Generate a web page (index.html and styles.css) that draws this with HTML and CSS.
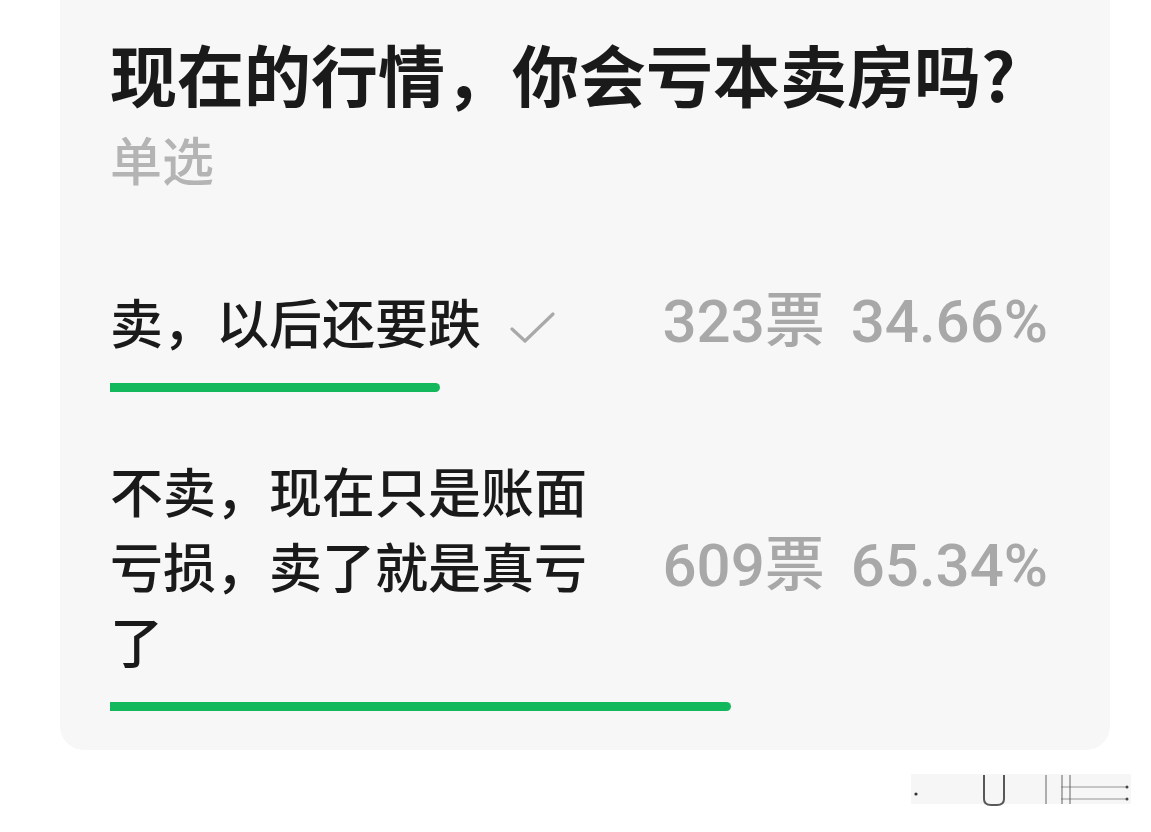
FILE: index.html
```html
<!DOCTYPE html>
<html lang="zh-CN">
<head>
  <meta charset="UTF-8">
  <meta name="viewport" content="width=device-width, initial-scale=1.0">
  <title>投票</title>
  <link rel="stylesheet" href="styles.css">
</head>
<body>
  <div class="card">
    <h1 class="vote-title">现在的行情，你会亏本卖房吗?</h1>
    <div class="vote-type">单选</div>

    <div class="option">
      <div class="option-row">
        <div class="option-label">卖，以后还要跌<svg class="check" width="48" height="36" viewBox="0 0 48 36"><path d="M5 19 L18 31 L46 4" fill="none" stroke="#a9a9a9" stroke-width="3.2" stroke-linecap="round" stroke-linejoin="round"/></svg></div>
        <div class="option-stats"><span class="votes">323票</span><span class="percent">34.66%</span></div>
      </div>
      <div class="bar"><div class="bar-fill" style="width: 34.66%"></div></div>
    </div>

    <div class="option option-second">
      <div class="option-row">
        <div class="option-label">不卖，现在只是账面亏损，卖了就是真亏了</div>
        <div class="option-stats"><span class="votes">609票</span><span class="percent">65.34%</span></div>
      </div>
      <div class="bar"><div class="bar-fill" style="width: 65.34%"></div></div>
    </div>
  </div>

  <div class="footer">
    <!-- 水印 -->
    <svg class="watermark" width="226" height="42" viewBox="0 0 226 42">
      <defs>
        <linearGradient id="fade" x1="0" x2="1" y1="0" y2="0">
          <stop offset="0" stop-color="#333" stop-opacity="0.8"/>
          <stop offset="0.3" stop-color="#777" stop-opacity="0.3"/>
          <stop offset="1" stop-color="#888" stop-opacity="0.2"/>
        </linearGradient>
      </defs>
      <rect x="0" y="5" width="220" height="30" fill="#000" opacity="0.035"/>
      <line x1="5" y1="25" x2="216" y2="25" stroke="url(#fade)" stroke-width="1.8"/>
      <path d="M73 6 V30 Q73 36 80 36 H86 Q93 36 93 30 V6" fill="none" stroke="#222" stroke-width="2" opacity="0.75"/>
      <line x1="135" y1="6" x2="135" y2="35" stroke="#666" stroke-width="2" opacity="0.5"/>
      <line x1="151" y1="6" x2="151" y2="35" stroke="#666" stroke-width="2" opacity="0.5"/>
      <line x1="159" y1="6" x2="159" y2="35" stroke="#666" stroke-width="2" opacity="0.5"/>
      <line x1="150" y1="18" x2="216" y2="18" stroke="#666" stroke-width="1.6" opacity="0.45"/>
      <line x1="150" y1="30" x2="216" y2="30" stroke="#666" stroke-width="1.6" opacity="0.45"/>
      <circle cx="5" cy="25" r="1.6" fill="#333"/>
      <circle cx="216" cy="18" r="1.5" fill="#444"/>
      <circle cx="216" cy="30" r="1.5" fill="#444"/>
    </svg>
  </div>
</body>
</html>
```

FILE: styles.css
```css
body {
  margin: 0;
  background: #fff;
  font-family: "Noto Sans CJK SC", sans-serif;
}
.card {
  margin: -40px 41px 0 60px;
  padding: 73px 49px 39px 50px;
  background-color: #f7f7f7;
  border-radius: 24px;
}
.vote-title {
  margin: 0;
  font-size: 67px;
  line-height: 80px;
  font-weight: 700;
  color: #1a1a1a;
}
.vote-type {
  margin-top: 16px;
  font-size: 52px;
  line-height: 60px;
  font-weight: 500;
  color: #b4b4b4;
}
.option {
  margin-top: 95px;
}
.option-second {
  margin-top: 61px;
}
.option-row {
  display: flex;
  align-items: center;
}
.option-label {
  flex: 1;
  max-width: 500px;
  font-size: 53px;
  line-height: 75px;
  font-weight: 500;
  color: #1a1a1a;
}
.check {
  margin-left: 26px;
  vertical-align: -2px;
}
.option-stats {
  margin-left: auto;
  padding-right: 13px;
  font-family: Roboto, "Noto Sans CJK SC", sans-serif;
  font-size: 60px;
  line-height: 75px;
  font-weight: 500;
  color: #a8a8a8;
  white-space: nowrap;
}
.percent {
  margin-left: 26px;
}
.bar {
  margin-top: 24px;
  height: 9px;
}
.bar-fill {
  height: 100%;
  background-color: #14b85c;
  border-radius: 0 5px 5px 0;
}
.footer {
  display: flex;
  justify-content: flex-end;
  padding: 19px 14px 0 0;
}
```
